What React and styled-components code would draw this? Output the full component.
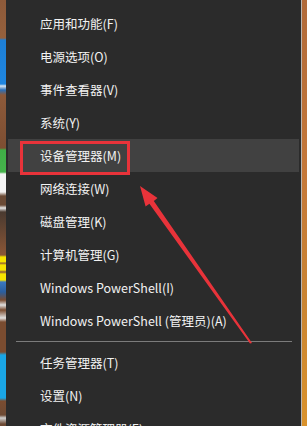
import React from "react";
import styled, { createGlobalStyle } from "styled-components";

const Global = createGlobalStyle`
  html, body { margin: 0; padding: 0; background: #2b2b2b; }
  body { width: 307px; height: 426px; overflow: hidden; }
`;

const Screen = styled.div`
  position: relative;
  display: flex;
  width: 307px;
  height: 426px;
  overflow: hidden;
  font-family: "Noto Sans CJK SC", "Noto Sans", sans-serif;
`;

const LeftStrip = styled.div`
  width: 6px;
  flex: none;
  background: linear-gradient(
    to bottom,
    #8d5a3a 0px, #95603c 38px,
    #1d7fd6 40px, #1f86e0 84px, #d8e6f2 86px, #2a6fb8 90px, #8d5a3a 95px,
    #7d4e32 148px, #3fae46 150px, #46b34c 172px, #f4f4f4 174px, #f4f4f4 192px, #6a4a35 196px,
    #6a4a35 205px, #e8e8e8 208px, #4a3a30 212px,
    #8a5636 255px, #f6e400 257px, #f6e400 262px, #8a5636 263px, #f6e400 265px, #f6e400 270px,
    #8a5636 272px, #f6e400 274px, #f6e400 280px, #3a78c0 282px, #2a5e9e 292px,
    #7a4c30 300px, #e0e0e0 305px, #7a4c30 310px, #e0e0e0 318px, #7a4c30 322px,
    #7a4c30 352px, #1aa6e6 355px, #1aa6e6 398px, #7a4c30 401px,
    #6d4a34 415px, #d0d0d0 418px, #6d4a34 424px
  );
`;

const RightStrip = styled.div`
  width: 6px;
  flex: none;
  display: flex;
`;

const EdgeLine = styled.div`
  width: 1px;
  background: #b9b4ae;
`;

const Orange = styled.div`
  flex: 1;
  background: linear-gradient(to bottom, #b06a3a, #c4783a 40%, #c98433 70%, #d9922c);
`;

const Menu = styled.div`
  flex: 1;
  background: #2b2b2b;
  padding-top: 7px;
  display: flex;
  flex-direction: column;
`;

const Row = styled.div`
  position: relative;
  height: 33px;
  flex: none;
  margin: 0 2px;
  padding-left: 32px;
  display: flex;
  align-items: center;
  color: #f2f2f2;
  font-size: 12.5px;
  letter-spacing: 0;
  white-space: nowrap;
  background: ${(p) => (p.$active ? "#414141" : "transparent")};
`;

const Mark = styled.div`
  position: absolute;
  left: 12px;
  top: 2px;
  width: 110px;
  height: 34px;
  box-sizing: border-box;
  border: 3px solid #e8333a;
  pointer-events: none;
`;

const Separator = styled.div`
  flex: none;
  padding: 4px 9px 4px 10px;
`;

const SeparatorLine = styled.div`
  height: 1px;
  background: #7b7b7b;
`;

const ArrowLayer = styled.svg`
  position: absolute;
  left: 0;
  top: 0;
  width: 307px;
  height: 426px;
  pointer-events: none;
`;

const top = [
  "应用和功能(F)",
  "电源选项(O)",
  "事件查看器(V)",
  "系统(Y)",
  "设备管理器(M)",
  "网络连接(W)",
  "磁盘管理(K)",
  "计算机管理(G)",
  "Windows PowerShell(I)",
  "Windows PowerShell (管理员)(A)",
];
const bottom = ["任务管理器(T)", "设置(N)", "文件资源管理器(E)"];

export default function App() {
  return (
    <>
      <Global />
      <Screen>
        <LeftStrip />
        <Menu>
          {top.map((t, i) => (
            <Row key={t} $active={i === 4}>
              {t}
              {i === 4 && <Mark />}
            </Row>
          ))}
          <Separator>
            <SeparatorLine />
          </Separator>
          {bottom.map((t) => (
            <Row key={t}>{t}</Row>
          ))}
        </Menu>
        <RightStrip>
          <EdgeLine />
          <Orange />
        </RightStrip>
        <ArrowLayer viewBox="0 0 307 426">
          <polygon
            points="140,186 157.5,198 153.8,201 252,343 250,343.5 149.4,203.8 145.6,206.5"
            fill="#e8333a"
          />
        </ArrowLayer>
      </Screen>
    </>
  );
}
